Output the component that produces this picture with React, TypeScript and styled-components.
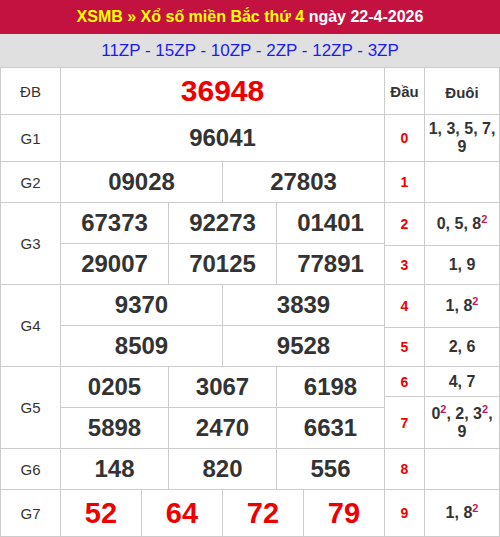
import React from "react";
import styled, { createGlobalStyle } from "styled-components";

const GlobalStyle = createGlobalStyle`
  html, body { margin: 0; padding: 0; background: #fff; }
  body { font-family: "Liberation Sans", Arial, Helvetica, sans-serif; }
  * { box-sizing: border-box; }
`;

const BORDER = "#cccccc";
const TEXT = "#333333";
const RED = "#ee0000";

const Wrapper = styled.div`
  width: 500px;
`;

const TitleBar = styled.div`
  height: 34px;
  background: #c41240;
  color: #ffffff;
  font-weight: bold;
  font-size: 16px;
  display: flex;
  align-items: center;
  justify-content: center;
  white-space: nowrap;
`;

const Yellow = styled.span`
  color: #ffff00;
`;

const CodesBar = styled.div`
  height: 33px;
  background: #e0e0e0;
  color: #1c1cf2;
  font-size: 17px;
  display: flex;
  align-items: center;
  justify-content: center;
`;

const Body = styled.div`
  display: flex;
`;

const ResultsGrid = styled.div`
  display: grid;
  width: 385px;
  grid-template-columns: 60px repeat(12, 27px);
  grid-template-rows: 47px 47px repeat(8, 41px) 47px;
  border-left: 1px solid ${BORDER};
  border-top: 1px solid ${BORDER};
`;

const Cell = styled.div`
  border-right: 1px solid ${BORDER};
  border-bottom: 1px solid ${BORDER};
  display: flex;
  align-items: center;
  justify-content: center;
  background: #fff;
`;

const Label = styled(Cell)<{ $rows: number }>`
  grid-column: 1;
  grid-row: span ${(p) => p.$rows};
  font-size: 15px;
  color: ${TEXT};
`;

type Variant = "normal" | "special" | "g7";

const NumCell = styled(Cell)<{ $span: number; $variant: Variant }>`
  grid-column: span ${(p) => p.$span};
  font-weight: bold;
  color: ${(p) => (p.$variant === "normal" ? TEXT : RED)};
  font-size: ${(p) =>
    p.$variant === "special" ? "30px" : p.$variant === "g7" ? "29px" : "24px"};
`;

const LotoGrid = styled.div`
  display: grid;
  width: 115px;
  grid-template-columns: 40px 75px;
  grid-template-rows: 47px 47px 41px 43px 39px 43px 39px 30px 52px 41px 47px;
  border-top: 1px solid ${BORDER};
`;

const HeadCell = styled(Cell)`
  font-weight: bold;
  font-size: 15px;
  color: ${TEXT};
`;

const HeadCellLow = styled(HeadCell)`
  padding-top: 2px;
`;

const DauCell = styled(Cell)`
  font-weight: bold;
  font-size: 14px;
  color: ${RED};
`;

const DuoiCell = styled(Cell)`
  font-weight: bold;
  font-size: 16px;
  line-height: 18px;
  color: ${TEXT};
  text-align: center;
  padding: 0 2px;
`;

const Sup = styled.span`
  font-size: 11px;
  color: #c2185b;
  position: relative;
  top: -6px;
  line-height: 0;
`;

type Prize = { label: string; rows: string[][]; variant?: Variant };

const prizes: Prize[] = [
  { label: "ĐB", rows: [["36948"]], variant: "special" },
  { label: "G1", rows: [["96041"]] },
  { label: "G2", rows: [["09028", "27803"]] },
  {
    label: "G3",
    rows: [
      ["67373", "92273", "01401"],
      ["29007", "70125", "77891"],
    ],
  },
  {
    label: "G4",
    rows: [
      ["9370", "3839"],
      ["8509", "9528"],
    ],
  },
  {
    label: "G5",
    rows: [
      ["0205", "3067", "6198"],
      ["5898", "2470", "6631"],
    ],
  },
  { label: "G6", rows: [["148", "820", "556"]] },
  { label: "G7", rows: [["52", "64", "72", "79"]], variant: "g7" },
];

const loto: Array<Array<[string, number]>> = [
  [["1", 1], ["3", 1], ["5", 1], ["7", 1], ["9", 1]],
  [],
  [["0", 1], ["5", 1], ["8", 2]],
  [["1", 1], ["9", 1]],
  [["1", 1], ["8", 2]],
  [["2", 1], ["6", 1]],
  [["4", 1], ["7", 1]],
  [["0", 2], ["2", 1], ["3", 2], ["9", 1]],
  [],
  [["1", 1], ["8", 2]],
];

function Tails({ items }: { items: Array<[string, number]> }) {
  return (
    <span>
      {items.map(([d, c], i) => (
        <React.Fragment key={i}>
          {d}
          {c > 1 && <Sup>{c}</Sup>}
          {i < items.length - 1 ? ", " : ""}
        </React.Fragment>
      ))}
    </span>
  );
}

export default function App() {
  return (
    <Wrapper>
      <GlobalStyle />
      <TitleBar>
        <Yellow>XSMB » Xổ số miền Bắc thứ 4</Yellow>&nbsp;ngày 22-4-2026
      </TitleBar>
      <CodesBar>11ZP - 15ZP - 10ZP - 2ZP - 12ZP - 3ZP</CodesBar>
      <Body>
        <ResultsGrid>
          {prizes.map((p) => (
            <React.Fragment key={p.label}>
              <Label $rows={p.rows.length}>{p.label}</Label>
              {p.rows.map((r, ri) =>
                r.map((n, ni) => (
                  <NumCell
                    key={`${ri}-${ni}`}
                    $span={12 / r.length}
                    $variant={p.variant ?? "normal"}
                  >
                    {n}
                  </NumCell>
                ))
              )}
            </React.Fragment>
          ))}
        </ResultsGrid>
        <LotoGrid>
          <HeadCell>Đầu</HeadCell>
          <HeadCellLow>Đuôi</HeadCellLow>
          {loto.map((items, i) => (
            <React.Fragment key={i}>
              <DauCell>{i}</DauCell>
              <DuoiCell>
                <Tails items={items} />
              </DuoiCell>
            </React.Fragment>
          ))}
        </LotoGrid>
      </Body>
    </Wrapper>
  );
}
